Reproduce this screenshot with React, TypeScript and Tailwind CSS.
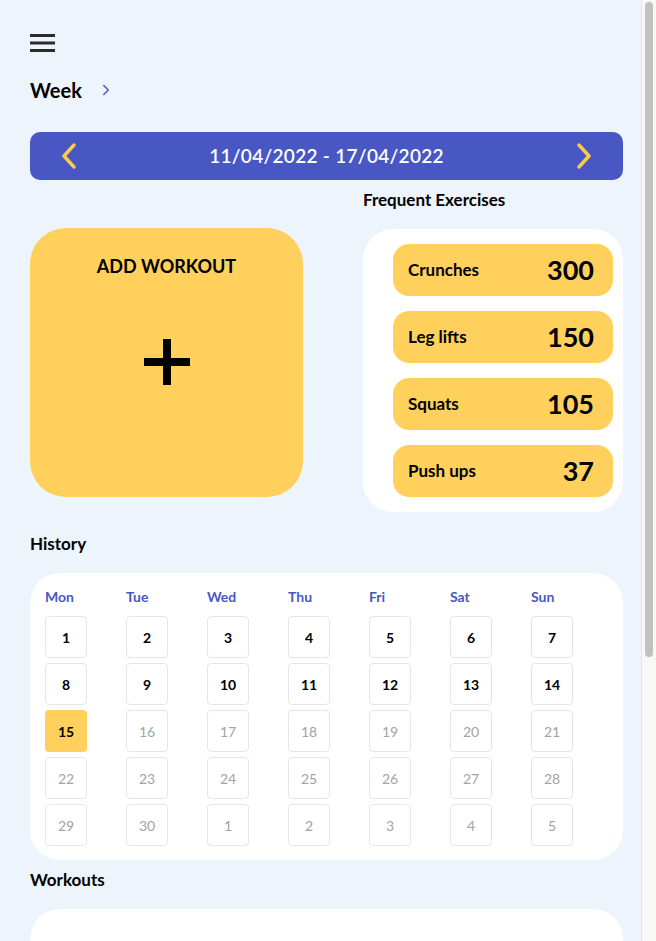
import { ChevronRight } from 'lucide-react'

const exercises = [
  { name: 'Crunches', count: 300 },
  { name: 'Leg lifts', count: 150 },
  { name: 'Squats', count: 105 },
  { name: 'Push ups', count: 37 },
]

const weekdays = ['Mon', 'Tue', 'Wed', 'Thu', 'Fri', 'Sat', 'Sun']

// 35 cells: April 2022 plus the first days of May
const days = Array.from({ length: 35 }, (_, i) => {
  const n = i + 1
  return n <= 30 ? { label: n, past: n <= 14, today: n === 15 } : { label: n - 30, past: false, today: false }
})

function Hamburger() {
  return (
    <svg width="25" height="18" viewBox="0 0 25 18" className="block">
      <rect x="0" y="0" width="25" height="3" fill="#2b2b2b" />
      <rect x="0" y="7.5" width="25" height="3" fill="#2b2b2b" />
      <rect x="0" y="15" width="25" height="3" fill="#2b2b2b" />
    </svg>
  )
}

function Arrow({ dir }: { dir: 'left' | 'right' }) {
  return (
    <svg width="16" height="26" viewBox="0 0 16 26" className="block">
      <path
        d={dir === 'left' ? 'M13 2 L3 13 L13 24' : 'M3 2 L13 13 L3 24'}
        fill="none"
        stroke="#FFC94A"
        strokeWidth="3.4"
        strokeLinecap="round"
        strokeLinejoin="round"
      />
    </svg>
  )
}

export default function App() {
  return (
    <div className="h-screen flex overflow-hidden bg-[#EDF4FB] font-['Lato','Noto_Sans',sans-serif] text-black">
      <main className="flex-1 min-w-0 pl-[30px] pr-[18px] pt-[34px] pb-[40px]">
        {/* Top bar */}
        <button className="block">
          <Hamburger />
        </button>

        <div className="mt-[26px] flex items-center gap-[15px] h-6">
          <span className="text-[20px] font-bold leading-6">Week</span>
          <ChevronRight className="w-[18px] h-[18px] text-[#4957C4]" strokeWidth={2} />
        </div>

        {/* Week selector */}
        <div className="mt-[30px] h-12 rounded-[10px] bg-[#4957C4] flex items-center justify-between px-[31px]">
          <Arrow dir="left" />
          <span className="text-white text-[19px] font-semibold tracking-[0.3px]">11/04/2022 - 17/04/2022</span>
          <Arrow dir="right" />
        </div>

        {/* Add workout + frequent exercises */}
        <div className="mt-2 flex items-start gap-[60px]">
          <div className="mt-10 w-[273px] h-[269px] rounded-[36px] bg-[#FFD05B] flex flex-col items-center pt-[26px]">
            <span className="text-[18px] font-bold leading-6">ADD WORKOUT</span>
            <svg width="46" height="46" viewBox="0 0 46 46" className="mt-[61px] block">
              <rect x="19" y="0" width="8" height="46" fill="#000" />
              <rect x="0" y="19" width="46" height="8" fill="#000" />
            </svg>
          </div>

          <div className="flex-1 flex flex-col">
            <span className="text-[17px] font-bold leading-6">Frequent Exercises</span>
            <div className="mt-[17px] bg-white rounded-[30px] pt-[15px] pb-[15px] pl-[30px] pr-[10px] flex flex-col gap-[15px]">
              {exercises.map((ex) => (
                <div key={ex.name} className="h-[52px] rounded-[16px] bg-[#FFD05B] flex items-center justify-between pl-[15px] pr-[19px]">
                  <span className="text-[17px] font-bold">{ex.name}</span>
                  <span className="text-[27px] font-bold">{ex.count}</span>
                </div>
              ))}
            </div>
          </div>
        </div>

        {/* History */}
        <h2 className="mt-5 text-[17px] font-bold leading-6">History</h2>
        <div className="mt-[17px] bg-white rounded-[30px] pt-[14px] pb-[14px] pl-[15px]">
          <div className="grid grid-cols-[repeat(7,81px)]">
            {weekdays.map((d) => (
              <span key={d} className="text-[14px] font-bold leading-5 text-[#4957C4]">{d}</span>
            ))}
          </div>
          <div className="mt-[9px] grid grid-cols-[repeat(7,81px)] gap-y-[5px]">
            {days.map((d, i) => (
              <div
                key={i}
                className={
                  d.today
                    ? 'w-[42px] h-[42px] rounded-[4px] bg-[#FFD05B] flex items-center justify-center text-[14px] font-bold'
                    : d.past
                    ? 'w-[42px] h-[42px] rounded-[4px] border border-[#E6E6E6] flex items-center justify-center text-[14px] font-bold text-black'
                    : 'w-[42px] h-[42px] rounded-[4px] border border-[#E6E6E6] flex items-center justify-center text-[14px] text-[#A3A3A3]'
                }
              >
                {d.label}
              </div>
            ))}
          </div>
        </div>

        {/* Workouts */}
        <h2 className="mt-2 text-[17px] font-bold leading-6">Workouts</h2>
        <div className="mt-[17px] h-[400px] bg-white rounded-[30px]" />
      </main>

      {/* scrollbar strip */}
      <div className="w-[15px] shrink-0 bg-[#F8F8F8] border-l border-[#E4E4E4] pt-[2px] px-[3px]">
        <div className="h-[655px] rounded-full bg-[#C1C1C1]" />
      </div>
    </div>
  )
}
